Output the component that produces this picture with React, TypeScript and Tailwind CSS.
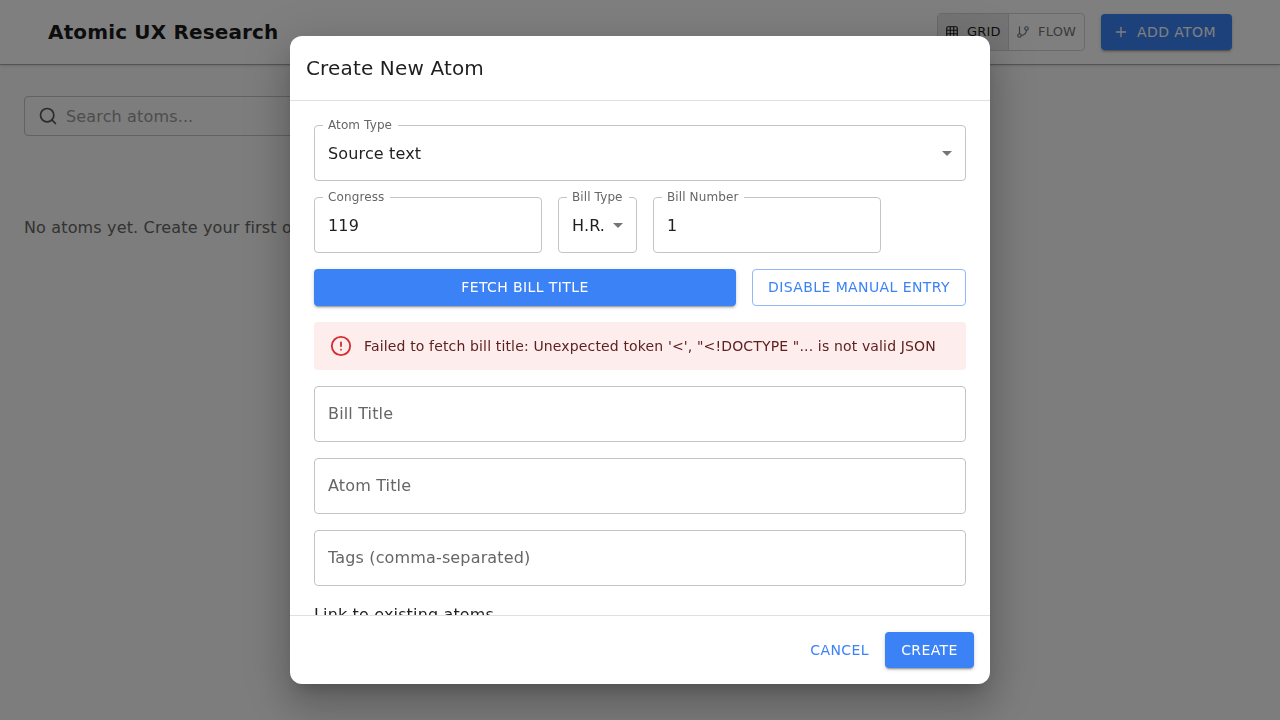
import { Plus, Search, Grid3x3, GitBranch, CircleAlert } from "lucide-react";

const font = { fontFamily: '"DejaVu Sans", sans-serif' };

const raised = "shadow-[0_3px_1px_-2px_rgba(0,0,0,0.2),0_2px_2px_0_rgba(0,0,0,0.14),0_1px_5px_0_rgba(0,0,0,0.12)]";

function Outlined({ label, value, placeholder, select, className }: { label?: string; value?: string; placeholder?: string; select?: boolean; className?: string }) {
  return (
    <div className={`relative flex h-14 items-center rounded border border-[#c4c4c4] bg-white px-[13px] text-base tracking-[0.15px] ${className ?? ""}`}>
      {label && (
        <span className="absolute -top-[9px] left-[8px] bg-white pl-[5px] pr-[6px] text-xs leading-[16px] tracking-[0.11px] text-[#666666]">{label}</span>
      )}
      {value && <span className="pt-px text-[#1f1f1f]">{value}</span>}
      {placeholder && <span className="text-[#666666]">{placeholder}</span>}
      {select && (
        <svg viewBox="0 0 10 5" className="absolute right-[13px] top-[25px] h-[5px] w-[10px] fill-[#757575]">
          <path d="M0 0h10L5 5z" />
        </svg>
      )}
    </div>
  );
}

export default function App() {
  return (
    <div className="relative h-[720px] w-[1280px] overflow-hidden bg-[#fafafa]" style={font}>
      <header className="flex h-[65px] items-center justify-between border-b border-[#a8a8a8] bg-white pl-12 pr-12 shadow-sm">
        <h1 className="text-xl font-bold tracking-[0.15px] text-[#1a1a1a]">Atomic UX Research</h1>
        <div className="flex items-center gap-4">
          <div className="flex h-[38px] w-[148px] rounded border border-[#d5d5d5] text-[13px] tracking-[0.2px]">
            <div className="flex w-[71px] items-center gap-[8px] border-r border-[#d5d5d5] bg-[#e8e8e8] pl-[7px] text-[#1f1f1f]">
              <Grid3x3 size={14} />
              <span>GRID</span>
            </div>
            <div className="flex flex-1 items-center gap-[8px] pl-[7px] text-[#757575]">
              <GitBranch size={14} />
              <span>FLOW</span>
            </div>
          </div>
          <button className={`flex h-9 w-[131px] items-center gap-2 rounded bg-[#3b82f6] pl-3 text-sm tracking-[0.4px] text-white ${raised}`}>
            <Plus size={16} />
            ADD ATOM
          </button>
        </div>
      </header>

      <main className="px-6 pt-[31px]">
        <div className="flex h-10 w-[600px] items-center gap-2 rounded border border-[#c4c4c4] pl-[13px]">
          <Search size={20} className="text-[#555555]" />
          <span className="pt-px text-base tracking-[0.15px] text-[#9a9a9a]">Search atoms...</span>
        </div>
        <p className="mt-[80px] text-base tracking-[0.15px] text-[#666666]">No atoms yet. Create your first one to get started.</p>
      </main>

      <div className="fixed inset-0 flex items-center justify-center bg-black/50">
        <div className="flex h-[648px] w-[700px] flex-col overflow-hidden rounded-xl bg-white shadow-[0_11px_15px_-7px_rgba(0,0,0,0.2),0_24px_38px_3px_rgba(0,0,0,0.14),0_9px_46px_8px_rgba(0,0,0,0.12)] will-change-transform">
          <h2 className="flex h-[65px] shrink-0 items-center border-b border-[#e0e0e0] px-4 text-xl tracking-[0.15px] text-[#1f1f1f]">Create New Atom</h2>

          <div className="flex min-h-0 flex-1 flex-col gap-4 overflow-hidden px-6 pt-6">
            <Outlined label="Atom Type" value="Source text" select className="shrink-0" />
            <div className="flex shrink-0 gap-4">
              <Outlined label="Congress" value="119" className="w-[228px]" />
              <Outlined label="Bill Type" value="H.R." select className="w-[79px]" />
              <Outlined label="Bill Number" value="1" className="w-[228px]" />
            </div>
            <div className="flex shrink-0 gap-4">
              <button className={`h-[37px] w-[422px] rounded bg-[#3b82f6] pb-px text-sm tracking-[0.4px] text-white ${raised}`}>FETCH BILL TITLE</button>
              <button className="h-[37px] flex-1 rounded border border-[#93b8f9] bg-white pb-px text-sm tracking-[0.4px] text-[#3b82f6]">DISABLE MANUAL ENTRY</button>
            </div>
            <div className="flex h-12 shrink-0 items-center gap-3 rounded bg-[#fdeded] pl-4 text-sm tracking-[0.15px] text-[#5f2120]">
              <CircleAlert size={22} className="text-[#d32f2f]" />
              <span>Failed to fetch bill title: Unexpected token '&lt;', "&lt;!DOCTYPE "... is not valid JSON</span>
            </div>
            <Outlined placeholder="Bill Title" className="shrink-0" />
            <Outlined placeholder="Atom Title" className="shrink-0" />
            <Outlined placeholder="Tags (comma-separated)" className="shrink-0" />
            <p className="-mt-px shrink-0 pt-[2px] text-base tracking-[0.15px] text-[#1f1f1f]">Link to existing atoms</p>
          </div>

          <div className="flex h-[69px] shrink-0 items-center justify-end gap-2 border-t border-[#e0e0e0] px-4">
            <button className="h-9 px-2 text-sm tracking-[0.4px] text-[#3b82f6]">CANCEL</button>
            <button className={`h-9 w-[89px] rounded bg-[#3b82f6] text-sm tracking-[0.4px] text-white ${raised}`}>CREATE</button>
          </div>
        </div>
      </div>
    </div>
  );
}
